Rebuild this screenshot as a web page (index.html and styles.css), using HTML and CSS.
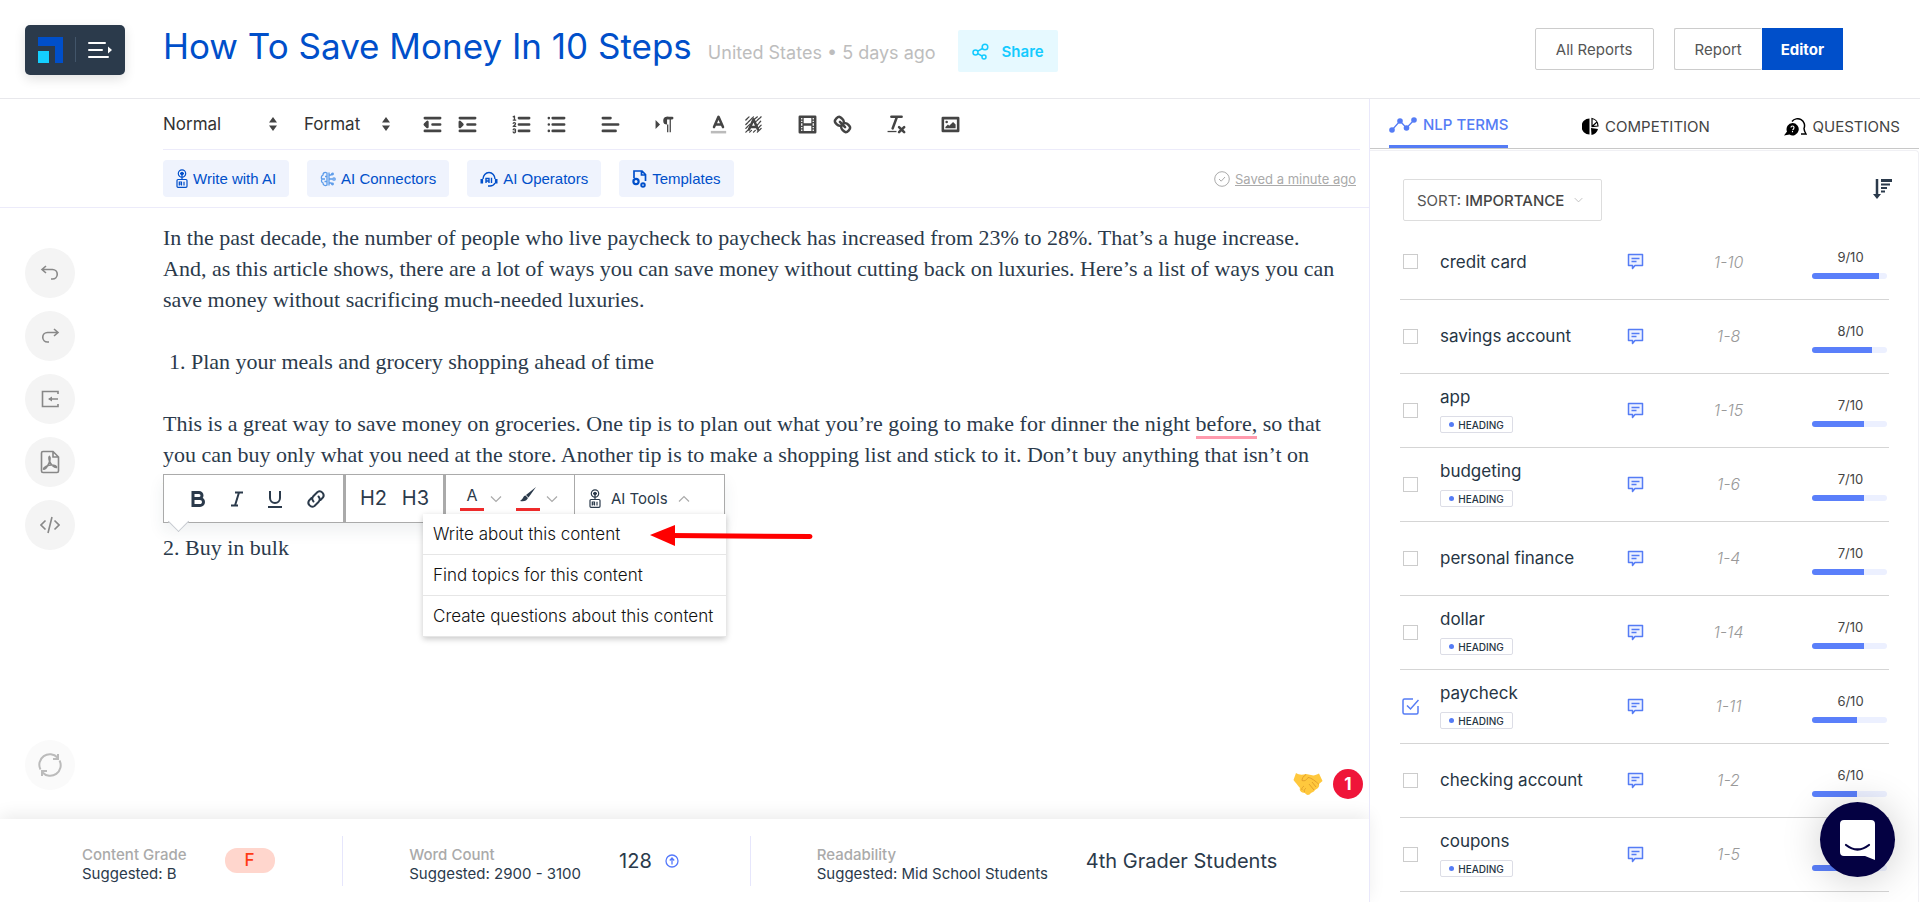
FILE: index.html
```html
<!DOCTYPE html>
<html lang="en">
<head>
    <meta charset="UTF-8">
    <meta name="viewport" content="width=device-width, initial-scale=1.0">
    <title>How To Save Money In 10 Steps</title>
    <link rel="stylesheet" href="styles.css">
</head>
<body>
    <svg class="sprite" aria-hidden="true">
        <symbol id="note" viewBox="0 0 17 17">
            <path d="M1.500 1.500h14v11H8l-2.500 3v-3h-4z" fill="#eef2ff" stroke="#557cf5" stroke-width="1.500" stroke-linejoin="round"/>
            <path d="M4.500 5.500h8M4.500 8.500h5" stroke="#557cf5" stroke-width="1.300"/>
        </symbol>
        <symbol id="arrows" viewBox="0 0 8 14">
            <path d="M4 0 8 5.500H0zM4 14 0 8.500h8z" fill="#444"/>
        </symbol>
        <symbol id="down" viewBox="0 0 12 8">
            <path d="M1 1.500 6 6.500 11 1.500" fill="none" stroke="currentColor" stroke-width="1.200"/>
        </symbol>
        <symbol id="robot" viewBox="0 0 12 19">
            <g fill="none" stroke="currentColor" stroke-width="1.200">
                <circle cx="6" cy="4.500" r="3.700"/>
                <circle cx="6" cy="4.500" r="1.200"/>
                <path d="M6 5v5.500M4 4.500h4"/>
                <rect x="1" y="10.500" width="10" height="7.800" rx="1"/>
                <path d="M3.300 16.500v-3.500h2.200v3.500M3.300 15h2.200M8 12.800v3.700"/>
            </g>
        </symbol>
    </svg>

    <header class="header">
        <button class="logo" aria-label="Menu">
            <svg width="25" height="26" viewBox="0 0 25 26"><path d="M0 0h25v26h-8V9H0z" fill="#004fca"/><path d="M0 14h11v12H0z" fill="#14cfff"/></svg>
            <span class="logo-line"></span>
            <svg width="25" height="18" viewBox="0 0 25 18"><path d="M1 2h16M1 9h13M1 16h19" stroke="#fff" stroke-width="2" stroke-linecap="round"/><path d="M20 5.500 24 9l-4 3.500z" fill="#fff"/></svg>
        </button>
        <h1 class="title">How To Save Money In 10 Steps</h1>
        <span class="meta">United States • 5 days ago</span>
        <button class="share">
            <svg width="17" height="17" viewBox="0 0 17 17" fill="none" stroke="#14cbff" stroke-width="1.500"><circle cx="3.500" cy="9.500" r="2.500"/><circle cx="13" cy="4" r="2.800"/><circle cx="12" cy="14" r="2"/><path d="M5.800 8.200 10.500 5.500M5.800 10.700 10 13"/></svg>
            Share
        </button>
        <nav class="views">
            <button class="view">All Reports</button>
            <div class="toggle">
                <button class="view">Report</button>
                <button class="view active">Editor</button>
            </div>
        </nav>
    </header>

    <main class="main">
        <section class="editor">
            <div class="toolbar">
                <label class="picker picker-normal">
                    <select aria-label="Block style"><option>Normal</option></select>
                    <svg width="8" height="14"><use href="#arrows"/></svg>
                </label>
                <label class="picker picker-format">
                    <select aria-label="Format"><option>Format</option></select>
                    <svg width="8" height="14"><use href="#arrows"/></svg>
                </label>
                <div class="tools">
                    <button aria-label="Outdent"><svg viewBox="0 0 18 18"><path d="M3 14h12M3 4h12M9 9h6"/><path class="both" d="M5 7v4L3 9z"/></svg></button>
                    <button aria-label="Indent"><svg viewBox="0 0 18 18"><path d="M3 14h12M3 4h12M9 9h6"/><path class="both" d="M3 7v4l2-2z"/></svg></button>
                </div>
                <div class="tools">
                    <button aria-label="Ordered list"><svg viewBox="0 0 18 18"><path d="M7 4h8M7 9h8M7 14h8"/><path class="thin" d="M2.500 5.500h2M2.500 3 3.500 2.500v3M4.500 10.500h-2c0-.234 1.850-1.076 1.850-2.234a.959.959 0 0 0-1.850-.110M2.500 14.846a.959.959 0 0 0 1.850-.109A.7.7 0 0 0 3.750 14a.688.688 0 0 0 .6-.736.959.959 0 0 0-1.850-.109"/></svg></button>
                    <button aria-label="Bullet list"><svg viewBox="0 0 18 18"><path d="M6 4h9M6 9h9M6 14h9M3 4h0M3 9h0M3 14h0"/></svg></button>
                </div>
                <div class="tools">
                    <button aria-label="Align"><svg viewBox="0 0 18 18"><path d="M3 9h12M3 14h10M3 4h6"/></svg></button>
                </div>
                <div class="tools">
                    <button aria-label="Text direction"><svg viewBox="0 0 18 18"><path class="fill" d="M2 12.500 5.500 9 2 5.500zM11 3a3 3 0 0 0 0 6h1V3zM11 4h1v11h-1zM13 4h1v11h-1z"/><path d="M15 4h-4"/></svg></button>
                </div>
                <div class="tools">
                    <button aria-label="Text color"><svg viewBox="0 0 18 18"><path class="label" d="M3 15h12"/><path d="M5.500 11 9 3l3.500 8M6.380 9h5.250"/></svg></button>
                    <button aria-label="Background color"><svg viewBox="0 0 18 18"><path class="thin" stroke-dasharray="2 .7" d="M3 5.500 5.500 3M3 9l6-6M3 12l3.500-3.500M3 15l3-3M6 15l1.500-1.500M9 15l1.500-1.500M12 15l3-3M12.500 12 15 9.500M11.500 10 15 6M10 7.500 15 3M9.500 5 12 3"/><path d="M5.500 13 9 5l3.500 8M6.380 11h5.250"/></svg></button>
                </div>
                <div class="tools">
                    <button aria-label="Video"><svg viewBox="0 0 18 18"><path d="M3 3h12v12H3z"/><path class="fill" d="M5 3h1v12H5zM12 3h1v12h-1zM5 8h8v2H5zM3 5h3v1H3zM3 7h3v1H3zM3 10h3v1H3zM3 12h3v1H3zM12 5h3v1h-3zM12 7h3v1h-3zM12 10h3v1h-3zM12 12h3v1h-3z"/></svg></button>
                    <button aria-label="Link"><svg viewBox="0 0 18 18"><path d="M7 7l4 4M8.900 4.577a3.476 3.476 0 0 1 .360 4.679A3.476 3.476 0 0 1 4.577 8.900C3.185 7.500 2.035 6.400 4.217 4.217S7.500 3.185 8.900 4.577ZM13.423 9.100a3.476 3.476 0 0 0-4.679-.360 3.476 3.476 0 0 0 .360 4.679c1.392 1.392 2.500 2.542 4.679.360S14.815 10.500 13.423 9.100Z"/></svg></button>
                </div>
                <div class="tools">
                    <button aria-label="Clear format"><svg viewBox="0 0 18 18"><path d="M5 3h8M6 12l3.350-9M11 11l4 4M15 11l-4 4"/><path class="fill" d="M2 14h7v1H2z"/></svg></button>
                </div>
                <div class="tools">
                    <button aria-label="Image"><svg viewBox="0 0 18 18"><path d="M3 4h12v10H3z"/><circle class="fill" cx="6" cy="7" r="1"/><path class="fill" d="M5 12v-1l2-2 1 1 3-3 2 2v3z"/></svg></button>
                </div>
            </div>

            <div class="ai-bar">
                <button class="ai"><svg width="12" height="19"><use href="#robot"/></svg>Write with AI</button>
                <button class="ai">
                    <svg width="16" height="16" viewBox="0 0 16 16" fill="none" stroke="#5b9bea" stroke-width="1.300"><path d="M7 1.500v13M7 2C4 .5 3 2.500 3 4 1 5 1 7 2 8c-1 1.500-.5 3.500 1 4 0 2 2 3.500 4 2M7 5.500H5M7 10.500H4.500M2.500 8H5M9 1.500v13M9 8h3.500M9 4h2l1-1M9 12h2l1 1"/><circle cx="14" cy="8" r="1.200"/><circle cx="12.500" cy="3" r=".8"/><circle cx="12.500" cy="13" r=".8"/></svg>
                    AI Connectors
                </button>
                <button class="ai">
                    <svg width="18" height="16" viewBox="0 0 18 16" fill="none" stroke="currentColor" stroke-width="1.400"><path d="M3 8a6 6.500 0 0 1 12 0M15 12c-1 2-3 3-5 3H8"/><path d="M1.800 8v4.500M16.200 8v4.500" stroke-width="2.600"/><path d="M6 12V7.500h3V12M6 10h3M11.500 6.800V12"/></svg>
                    AI Operators
                </button>
                <button class="ai">
                    <svg width="15" height="18" viewBox="0 0 15 18" fill="none" stroke="currentColor" stroke-width="1.700"><path d="M2 8V1h8l3.500 3.500V11M9.500 1v4h4"/><circle cx="4" cy="11.500" r="2.600" stroke-width="2.200"/><circle cx="11" cy="15" r="1.800" stroke-width="1.900"/></svg>
                    Templates
                </button>
                <div class="saved">
                    <svg width="16" height="16" viewBox="0 0 16 16" fill="none" stroke="#aaa"><circle cx="8" cy="8" r="7.300"/><path d="M5 8l2.200 2.200L11 6"/></svg>
                    <a href="#">Saved a minute ago</a>
                </div>
            </div>

            <div class="workspace">
                <aside class="rail">
                    <button aria-label="Undo"><svg viewBox="0 0 20 20"><path d="M6 3 2 6.500 6 10M2 6.500h10.500a4.500 4.500 0 0 1 0 9.500H11"/></svg></button>
                    <button aria-label="Redo"><svg viewBox="0 0 20 20"><path d="M14 3l4 3.500L14 10M18 6.500H7.500a4.500 4.500 0 0 0 0 9.500H9"/></svg></button>
                    <button aria-label="Import"><svg viewBox="0 0 20 20"><path d="M18 5V2.500H2.500v15H18V15M18 10H9"/><path class="solid" d="M8 10l4-2.500v5z"/></svg></button>
                    <button aria-label="Export PDF"><svg class="tall" viewBox="0 0 20 24"><path d="M1.500 3Q1.500 1.500 3 1.500h10L18.500 7v14q0 1.500-1.500 1.500H3q-1.500 0-1.500-1.500zM13 1.500V7h5.500"/><path d="M9.500 6.500c1.500 1.500 0 6-1.500 8.500-1.500 3-3.500 4.500-4.500 4 0-2 5-4 8-4s5.500 1 5 2.500c-2 .5-6-3-7-6.500-.6-2-.8-4 0-4.500z"/></svg></button>
                    <button aria-label="Source"><svg viewBox="0 0 20 20"><path d="M5.500 5.500 1 10l4.500 4.500M14.500 5.500 19 10l-4.500 4.500M12 2 8 18"/></svg></button>
                    <button class="refresh" aria-label="Refresh"><svg class="big" viewBox="0 0 26 26"><path d="M3.500 17.500A10.500 10.500 0 0 1 20.500 5.500M22.500 8.500A10.500 10.500 0 0 1 5.500 20.500M21 2v5h-5M5 24v-5h5"/></svg></button>
                </aside>

                <article class="text">
                    <p>In the past decade, the number of people who live paycheck to paycheck has increased from 23% to 28%. That’s a huge increase.<br>And, as this article shows, there are a lot of ways you can save money without cutting back on luxuries. Here’s a list of ways you can<br>save money without sacrificing much-needed luxuries.</p>
                    <p class="item">1. Plan your meals and grocery shopping ahead of time</p>
                    <div class="anchor">
                        <p>This is a great way to save money on groceries. One tip is to plan out what you’re going to make for dinner the night <span class="typo">before,</span> so that<br>you can buy only what you need at the store. Another tip is to make a shopping list and stick to it. Don’t buy anything that isn’t on<br>the list.</p>
                        <div class="popup">
                            <div class="group marks">
                                <button aria-label="Bold"><svg width="16" height="18" viewBox="0 0 16 18"><path d="M3 2.500h6a3 3 0 0 1 0 6H3zM3 8.500h7a3.500 3.500 0 0 1 0 7H3z" fill="none" stroke="#2b3a4b" stroke-width="3"/></svg></button>
                                <button aria-label="Italic"><svg width="16" height="18" viewBox="0 0 16 18"><path d="M6 2.500h8M2 15.500h7M10 2.500 6 15.500" stroke="#2b3a4b" stroke-width="2"/></svg></button>
                                <button aria-label="Underline"><svg width="16" height="18" viewBox="0 0 16 18"><path d="M3 1v7a5 5 0 0 0 10 0V1M1 17h14" fill="none" stroke="#2b3a4b" stroke-width="2"/></svg></button>
                                <button aria-label="Add link"><svg width="20" height="20" viewBox="0 0 20 20" fill="none" stroke="#2b3a4b" stroke-width="2" stroke-linecap="round"><path d="M7.500 12.500a4 4 0 0 1 0-5.500l4-4a4 4 0 0 1 5.500 5.500l-2.500 2.500M12.500 7.500a4 4 0 0 1 0 5.500l-4 4A4 4 0 0 1 3 11.500L5.500 9"/></svg></button>
                            </div>
                            <div class="group heads">
                                <button>H2</button>
                                <button>H3</button>
                            </div>
                            <div class="group colors">
                                <button class="swatch">A</button>
                                <svg class="chev" width="12" height="8"><use href="#down"/></svg>
                                <button class="swatch" aria-label="Highlight"><svg width="18" height="16" viewBox="0 0 18 16" fill="#2b3a4b"><path d="M17 0 7 8l2.500 2.500zM6.500 8.500C4 9 4 12.500 1 14c4 1 7-.5 8-3z"/></svg></button>
                                <svg class="chev" width="12" height="8"><use href="#down"/></svg>
                            </div>
                            <button class="ai-tools">
                                <svg width="12" height="19"><use href="#robot"/></svg>
                                AI Tools
                                <svg class="up" width="12" height="8"><use href="#down"/></svg>
                            </button>
                            <span class="tail"></span>
                            <div class="menu">
                                <button>Write about this content</button>
                                <button>Find topics for this content</button>
                                <button>Create questions about this content</button>
                                <svg class="pointer" width="164" height="24" viewBox="0 0 164 24"><path d="M20 11.500 160 12.500" stroke="#f00" stroke-width="5" stroke-linecap="round"/><path d="M0 11 25 1v21z" fill="#f00"/></svg>
                            </div>
                        </div>
                    </div>
                    <p>2. Buy in bulk</p>
                    <div class="alerts">
                        <svg width="30" height="24" viewBox="0 0 30 24"><path d="M3 1c3 2 6 2 10 1l5 1c3 1 5 0 8-1.500L29.500 9 26 12c1 3-2 5-4 6-1 2-3 2-4 3-2 3-5 2-6 0-4 0-6-3-5-5-2-2-3-4-5-6L.5 8z" fill="#ffc83d"/><path d="M13 2.500c-3 2-4 4-4 6 3 1 5-1 6-3 3 0 8 4 11 7M12 20c-2-1 0-3 1-4M9 18c-1-2 1-3 2-4M16 12l5 6M19 10l4 5" fill="none" stroke="#e3a02b"/></svg>
                        <span class="count">1</span>
                    </div>
                </article>
            </div>

            <footer class="stats">
                <div class="stat stat-grade">
                    <div class="stat-label"><div class="stat-name">Content Grade</div><div>Suggested: B</div></div>
                    <span class="grade">F</span>
                </div>
                <div class="stat">
                    <div class="stat-label"><div class="stat-name">Word Count</div><div>Suggested: 2900 - 3100</div></div>
                    <span class="stat-value">128</span>
                    <svg width="14" height="14" viewBox="0 0 14 14" fill="none" stroke="#5579fb" stroke-width="1.300"><circle cx="7" cy="7" r="6"/><path d="M7 10.500V5M4.800 6.500 7 4l2.200 2.500"/></svg>
                </div>
                <div class="stat">
                    <div class="stat-label"><div class="stat-name">Readability</div><div>Suggested: Mid School Students</div></div>
                    <span class="stat-value">4th Grader Students</span>
                </div>
            </footer>
        </section>

        <aside class="sidebar">
            <nav class="tabs">
                <a class="tab active" href="#">
                    <svg width="28" height="16" viewBox="0 0 28 16"><path d="M3 13 11 4l6.500 7L25 3" fill="none" stroke="#557cf5" stroke-width="1.200"/><g fill="#557cf5"><circle cx="3" cy="13" r="2.800"/><circle cx="11" cy="4" r="2.800"/><circle cx="17.500" cy="11" r="2.800"/><circle cx="25" cy="3" r="2.800"/></g></svg>
                    NLP TERMS
                </a>
                <a class="tab" href="#">
                    <svg width="17" height="19" viewBox="0 0 17 19"><path d="M7.500 1.500v16A8 8 0 0 1 7.500 1.500zM9 11l7 1a8 8 0 0 1-6.500 6z" fill="#000"/><path d="M10 1.500a7.500 7.500 0 0 1 6 7.500l-6 .5zM10 9.500 15 5" fill="none" stroke="#000" stroke-width="1.200"/></svg>
                    COMPETITION
                </a>
                <a class="tab" href="#">
                    <svg width="23" height="18" viewBox="0 0 23 18"><path d="M8.500 5a6.200 6.200 0 1 1-3 11.600L0 17.500l3-4A6.200 6.200 0 0 1 8.500 5z" fill="#000"/><path d="M8 3.500a7 7 0 0 1 12 7q0 2 2 5.500h-5" fill="none" stroke="#000" stroke-width="1.500"/><path d="M7 9.500q0-1.500 1.500-1.500t1.500 1.500-1.500 2.500M8.500 13v1.300" fill="none" stroke="#fff" stroke-width="1.100"/></svg>
                    QUESTIONS
                </a>
            </nav>
            <div class="panel">
                <div class="sort-row">
                    <label class="sort">SORT:
                        <select><option>IMPORTANCE</option></select>
                        <svg width="9" height="6"><use href="#down"/></svg>
                    </label>
                    <button class="order" aria-label="Sort order"><svg width="19" height="20" viewBox="0 0 19 20"><path d="M4 0v17" stroke="#2b3a4b" stroke-width="2.500"/><path d="M0 15h8l-4 5zM8 0h11v3H8zM8 4.500h9v2H8zM8 8h6v2H8zM8 11.500h4v2H8z" fill="#2b3a4b"/></svg></button>
                </div>
                <table class="terms">
                    <tr>
                        <td class="check"><input type="checkbox" aria-label="credit card"></td>
                        <td class="term">credit card</td>
                        <td class="note"><svg width="17" height="17"><use href="#note"/></svg></td>
                        <td class="range">1-10</td>
                        <td class="score">9/10<div class="bar"><div class="fill" style="width:89%"></div></div></td>
                    </tr>
                    <tr>
                        <td class="check"><input type="checkbox" aria-label="savings account"></td>
                        <td class="term">savings account</td>
                        <td class="note"><svg width="17" height="17"><use href="#note"/></svg></td>
                        <td class="range">1-8</td>
                        <td class="score">8/10<div class="bar"><div class="fill" style="width:80%"></div></div></td>
                    </tr>
                    <tr>
                        <td class="check"><input type="checkbox" aria-label="app"></td>
                        <td class="term">app<span class="tag">HEADING</span></td>
                        <td class="note"><svg width="17" height="17"><use href="#note"/></svg></td>
                        <td class="range">1-15</td>
                        <td class="score">7/10<div class="bar"><div class="fill" style="width:69%"></div></div></td>
                    </tr>
                    <tr>
                        <td class="check"><input type="checkbox" aria-label="budgeting"></td>
                        <td class="term">budgeting<span class="tag">HEADING</span></td>
                        <td class="note"><svg width="17" height="17"><use href="#note"/></svg></td>
                        <td class="range">1-6</td>
                        <td class="score">7/10<div class="bar"><div class="fill" style="width:69%"></div></div></td>
                    </tr>
                    <tr>
                        <td class="check"><input type="checkbox" aria-label="personal finance"></td>
                        <td class="term">personal finance</td>
                        <td class="note"><svg width="17" height="17"><use href="#note"/></svg></td>
                        <td class="range">1-4</td>
                        <td class="score">7/10<div class="bar"><div class="fill" style="width:69%"></div></div></td>
                    </tr>
                    <tr>
                        <td class="check"><input type="checkbox" aria-label="dollar"></td>
                        <td class="term">dollar<span class="tag">HEADING</span></td>
                        <td class="note"><svg width="17" height="17"><use href="#note"/></svg></td>
                        <td class="range">1-14</td>
                        <td class="score">7/10<div class="bar"><div class="fill" style="width:69%"></div></div></td>
                    </tr>
                    <tr>
                        <td class="check">
                            <label class="ticked"><input type="checkbox" aria-label="paycheck" checked><svg width="17" height="17" viewBox="0 0 17 17" fill="none" stroke="#557cf5" stroke-width="1.500"><path d="M11 1H2.500Q1 1 1 2.500v12Q1 16 2.500 16h12q1.500 0 1.500-1.500V8M5 7.500l3.500 3.500L16.500 2"/></svg></label>
                        </td>
                        <td class="term">paycheck<span class="tag">HEADING</span></td>
                        <td class="note"><svg width="17" height="17"><use href="#note"/></svg></td>
                        <td class="range">1-11</td>
                        <td class="score">6/10<div class="bar"><div class="fill" style="width:60%"></div></div></td>
                    </tr>
                    <tr>
                        <td class="check"><input type="checkbox" aria-label="checking account"></td>
                        <td class="term">checking account</td>
                        <td class="note"><svg width="17" height="17"><use href="#note"/></svg></td>
                        <td class="range">1-2</td>
                        <td class="score">6/10<div class="bar"><div class="fill" style="width:60%"></div></div></td>
                    </tr>
                    <tr>
                        <td class="check"><input type="checkbox" aria-label="coupons"></td>
                        <td class="term">coupons<span class="tag">HEADING</span></td>
                        <td class="note"><svg width="17" height="17"><use href="#note"/></svg></td>
                        <td class="range">1-5</td>
                        <td class="score">6/10<div class="bar"><div class="fill" style="width:60%"></div></div></td>
                    </tr>
                </table>
            </div>
        </aside>
    </main>

    <button class="chat" aria-label="Open chat">
        <svg width="35" height="40" viewBox="0 0 35 40"><path d="M4 0h27q4 0 4 4v36l-10-4H4q-4 0-4-4V4q0-4 4-4z" fill="#fff"/><path d="M6 25q11.500 9 23 0" fill="none" stroke="#040142" stroke-width="2.200" stroke-linecap="round"/></svg>
    </button>
</body>
</html>
```
FILE: styles.css
```css
* {
    box-sizing: border-box;
}
body {
    margin: 0;
    min-height: 100vh;
    display: flex;
    flex-direction: column;
    font-family: Inter, sans-serif;
    font-size: 15px;
    color: #2b3a4b;
    background: #fff;
}
button, select {
    font: inherit;
    color: inherit;
    border: none;
    background: none;
    padding: 0;
    cursor: pointer;
}
select {
    appearance: none;
    outline: none;
}
a {
    color: inherit;
    text-decoration: none;
}
svg {
    flex: none;
    display: block;
}
.sprite {
    position: absolute;
    width: 0;
    height: 0;
}

/* header */
.header {
    height: 99px;
    display: flex;
    align-items: center;
    padding: 0 77px 0 25px;
    border-bottom: 1px solid #e8e8ec;
}
.logo {
    width: 100px;
    height: 50px;
    margin: 1px 38px 0 0;
    display: flex;
    align-items: center;
    justify-content: center;
    gap: 12px;
    border-radius: 5px;
    background: #2b3a4b;
    box-shadow: 0 4px 12px rgba(0, 0, 0, 0.12);
}
.logo-line {
    width: 1px;
    height: 25px;
    background: #42556a;
}
.title {
    margin: 0 0 6px;
    font-size: 35px;
    font-weight: 400;
    color: #004fca;
}
.meta {
    margin: 6px 22px 0 16px;
    font-size: 18px;
    color: #bdbdbd;
}
.share {
    width: 100px;
    height: 42px;
    margin-top: 4px;
    display: flex;
    align-items: center;
    justify-content: center;
    gap: 13px;
    border-radius: 2px;
    background: #e6f9ff;
    color: #14cbff;
    font-weight: 600;
}
.views {
    margin-left: auto;
    display: flex;
    gap: 20px;
}
.view {
    height: 42px;
    padding: 0 20px;
    border: 1px solid #ccc;
    border-radius: 2px;
    color: #555;
}
.toggle {
    display: flex;
}
.toggle .view:first-child {
    border-right: none;
}
.view.active {
    padding: 0 18px;
    border-color: #004fca;
    border-radius: 0;
    background: #004fca;
    color: #fff;
    font-weight: 700;
}

/* editor */
.main {
    flex: 1;
    display: grid;
    grid-template-columns: 1fr 551px;
}
.editor {
    display: flex;
    flex-direction: column;
}
.toolbar {
    height: 51px;
    margin: 0 9px 0 163px;
    display: flex;
    align-items: center;
    border-bottom: 1px solid #ecebfa;
}
.picker {
    display: flex;
    align-items: center;
    justify-content: space-between;
    font-size: 17px;
    color: #333;
}
.picker-normal {
    width: 114px;
    margin-right: 27px;
}
.picker-format {
    width: 86px;
    margin-right: 25px;
}
.tools {
    display: flex;
    margin-right: 19px;
}
.tools button {
    width: 35px;
    height: 30px;
    display: flex;
    align-items: center;
    justify-content: center;
}
.tools svg {
    width: 23px;
    height: 23px;
    fill: none;
    stroke: #444;
    stroke-width: 2;
    stroke-linecap: round;
    stroke-linejoin: round;
}
.tools .thin {
    stroke-width: 1;
}
.tools .both {
    fill: #444;
}
.tools .fill {
    fill: #444;
    stroke: none;
}
.tools .label {
    stroke: #bbb;
    stroke-linecap: butt;
}
.ai-bar {
    height: 58px;
    padding: 0 13px 0 163px;
    display: flex;
    align-items: center;
    gap: 18px;
    border-bottom: 1px solid #ecebfa;
}
.ai {
    height: 37px;
    padding: 0 13px;
    display: flex;
    align-items: center;
    gap: 5px;
    border-radius: 4px;
    background: #eff3fd;
    color: #004fca;
    font-family: "Liberation Sans", Arial, sans-serif;
}
.saved {
    margin-left: auto;
    display: flex;
    align-items: center;
    gap: 5px;
    font-size: 13px;
    color: #aaa;
}
.saved a {
    text-decoration: underline;
}
.workspace {
    flex: 1;
    display: flex;
}
.rail {
    width: 163px;
    padding: 40px 0 29px 25px;
    display: flex;
    flex-direction: column;
    gap: 13px;
}
.rail button {
    width: 50px;
    height: 50px;
    display: flex;
    align-items: center;
    justify-content: center;
    border-radius: 50%;
    background: #f4f4f4;
}
.rail svg {
    width: 20px;
    height: 20px;
    fill: none;
    stroke: #888;
    stroke-width: 1.6;
}
.rail .solid {
    fill: #888;
    stroke: none;
}
.rail .tall {
    height: 24px;
}
.rail .big {
    width: 26px;
    height: 26px;
    stroke: #bbb;
    stroke-width: 2;
}
.rail .refresh {
    margin-top: auto;
    background: #fafafa;
}
.text {
    flex: 1;
    position: relative;
    padding: 14px 8px 0 0;
    font-family: "Liberation Serif", "Times New Roman", serif;
    font-size: 22px;
    line-height: 31px;
}
.text p {
    margin: 0 0 31px;
}
.text .item {
    padding-left: 6px;
}
.typo {
    border-bottom: 3px solid #ff9aad;
}
.anchor {
    position: relative;
}
.alerts {
    position: absolute;
    right: 6px;
    bottom: 20px;
    display: flex;
    align-items: center;
    gap: 10px;
}
.count {
    width: 30px;
    height: 30px;
    border-radius: 50%;
    background: #ef1539;
    color: #fff;
    font: 700 17px/30px Inter, sans-serif;
    text-align: center;
}

/* selection popup */
.popup {
    position: absolute;
    top: 66px;
    left: 0;
    height: 49px;
    display: flex;
    border: 1px solid #aaa;
    background: #fff;
    font-family: Inter, sans-serif;
    box-shadow: 0 8px 16px rgba(43, 58, 75, 0.08);
}
.group {
    display: flex;
    align-items: center;
    border-right: 3px solid #aaa;
}
.marks {
    width: 182px;
    padding: 0 17px 0 26px;
    justify-content: space-between;
}
.heads {
    width: 100px;
    padding: 0 14px;
    justify-content: space-between;
    font-size: 20px;
}
.colors {
    width: 129px;
    padding: 0 0 4px 14px;
    gap: 6px;
    border-right-width: 1px;
}
.swatch {
    width: 24px;
    height: 29px;
    display: flex;
    justify-content: center;
    align-items: center;
    border-bottom: 3px solid #ef2b2b;
    font-size: 16px;
    line-height: 22px;
}
.chev {
    margin: 5px 8px 0 0;
    color: #aaa;
}
.up {
    color: #aaa;
    transform: rotate(180deg);
}
.ai-tools {
    width: 149px;
    padding-left: 14px;
    display: flex;
    align-items: center;
    gap: 10px;
    font-size: 15px;
}
.tail {
    position: absolute;
    left: 7px;
    top: 39px;
    width: 15px;
    height: 15px;
    border: solid #c5c9cf;
    border-width: 0 1px 1px 0;
    background: #fff;
    transform: rotate(45deg);
}
.menu {
    position: absolute;
    top: 39px;
    left: 259px;
    width: 303px;
    background: #fff;
    box-shadow: 0 2px 6px rgba(0, 0, 0, 0.22);
}
.menu button {
    width: 100%;
    height: 41px;
    padding-left: 10px;
    display: block;
    border-bottom: 1px solid #e6e6e6;
    color: #111;
    font-size: 17px;
    font-weight: 300;
    text-align: left;
}
.pointer {
    position: absolute;
    left: 227px;
    top: 10px;
}

/* stats */
.stats {
    height: 83px;
    display: grid;
    grid-template-columns: 21fr 25fr 38fr;
    align-items: center;
    background: #fff;
    box-shadow: 0 -4px 16px rgba(0, 0, 0, 0.08);
}
.stat {
    height: 50px;
    padding-left: 66px;
    display: flex;
    align-items: center;
    gap: 38px;
    border-left: 1px solid #e6e6fc;
}
.stat svg {
    margin-left: -25px;
}
.stat-grade {
    padding-left: 82px;
    border-left: none;
}
.stat-label {
    padding-top: 6px;
    line-height: 19px;
}
.stat-name {
    color: #aaa;
    font-weight: 500;
}
.stat-value {
    font-size: 20px;
}
.grade {
    width: 50px;
    height: 25px;
    border-radius: 12px;
    background: #ffd6cd;
    color: #ff3b14;
    font-size: 17px;
    font-weight: 500;
    line-height: 25px;
    text-align: center;
}

/* sidebar */
.sidebar {
    display: flex;
    flex-direction: column;
    padding-right: 1px;
    border-left: 1px solid #e9e8fb;
}
.tabs {
    height: 50px;
    padding: 0 19px;
    display: flex;
    justify-content: space-between;
    border-bottom: 1px solid #c8c8c8;
}
.tab {
    display: flex;
    align-items: center;
    gap: 6px;
    padding-top: 6px;
    color: #444;
}
.tab.active {
    padding: 5px 0 0;
    border-bottom: 3px solid #557cf5;
    color: #557cf5;
    font-weight: 500;
}
.panel {
    flex: 1;
    margin-top: 1px;
    padding: 28px 29px 0 30px;
    border: 1px solid #f0f0f4;
    border-width: 1px 1px 0 0;
    border-radius: 0 4px 0 0;
}
.sort-row {
    display: flex;
    justify-content: space-between;
    align-items: flex-start;
    padding-left: 3px;
    margin-bottom: 4px;
}
.sort {
    width: 199px;
    height: 42px;
    padding-left: 13px;
    display: flex;
    align-items: center;
    gap: 4px;
    border: 1px solid #ddd;
    border-radius: 2px;
    color: #555;
}
.sort select {
    color: #444;
    font-weight: 500;
}
.sort svg {
    margin-left: 5px;
    color: #bbb;
}
.order {
    margin-right: -3px;
}
.terms {
    width: 100%;
    table-layout: fixed;
    border-collapse: collapse;
}
.terms td {
    height: 74px;
    padding: 0;
    border-bottom: 1px solid #d5d5d5;
}
.check {
    width: 40px;
}
.check input {
    appearance: none;
    display: block;
    width: 15px;
    height: 15px;
    margin: 0 0 0 3px;
    border: 1px solid #ccc;
}
.ticked {
    display: block;
    margin-left: 2px;
}
.ticked input {
    position: absolute;
    opacity: 0;
}
.term {
    font-size: 17px;
    color: #263544;
}
.tag {
    display: flex;
    align-items: center;
    justify-content: center;
    gap: 4px;
    width: 73px;
    height: 17px;
    margin-top: 9px;
    border: 1px solid #dcdde6;
    border-radius: 2px;
    font-size: 10px;
    font-weight: 500;
}
.tag::before {
    content: "";
    width: 5px;
    height: 5px;
    border-radius: 50%;
    background: #557cf5;
}
.note {
    width: 59px;
}
.range {
    width: 85px;
    color: #999;
    font-size: 16px;
    font-style: italic;
    font-weight: 300;
    text-align: center;
}
.score {
    width: 118px;
    color: #444;
    font-size: 13px;
    text-align: center;
}
.terms .score {
    padding: 4px 0 0 41px;
}
.bar {
    height: 6px;
    margin: 8px 2px 0 0;
    border-radius: 3px;
    background: #ecf0ff;
    overflow: hidden;
}
.bar .fill {
    height: 100%;
    background: #5a7ffa;
}

.chat {
    position: fixed;
    right: 25px;
    bottom: 25px;
    width: 75px;
    height: 75px;
    display: flex;
    align-items: center;
    justify-content: center;
    border-radius: 50%;
    background: #040142;
    box-shadow: 0 2px 40px rgba(0, 0, 0, 0.2);
}
```
